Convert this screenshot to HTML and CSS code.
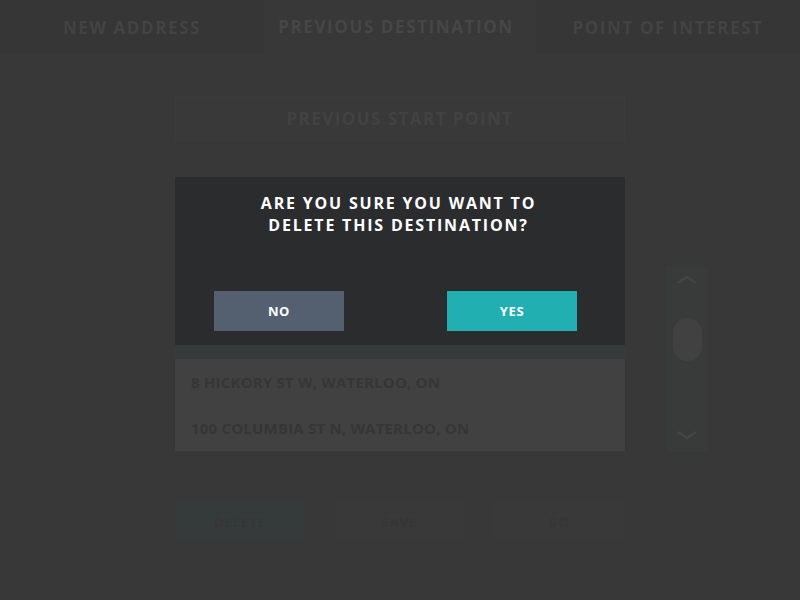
FILE: index.html
```html
<!DOCTYPE html>
<html>
<head>
<meta charset="utf-8">
<link rel="stylesheet" href="styles.css">
</head>
<body>
<div class="screen">
  <nav class="tabs">
    <div class="tab">NEW ADDRESS</div>
    <div class="tab active">PREVIOUS DESTINATION</div>
    <div class="tab">POINT OF INTEREST</div>
  </nav>
  <main class="main">
    <div class="start-btn">PREVIOUS START POINT</div>
    <div class="list-row">
      <ul class="list">
        <li class="item selected"></li>
        <li class="item">8 HICKORY ST W, WATERLOO, ON</li>
        <li class="item">100 COLUMBIA ST N, WATERLOO, ON</li>
      </ul>
      <div class="scrollbar">
        <svg class="chev" width="22" height="10" viewBox="0 0 22 10"><path d="M2 8 L11 2 L20 8" fill="none" stroke="#434545" stroke-width="2.5"/></svg>
        <div class="knob"></div>
        <svg class="chev down" width="22" height="10" viewBox="0 0 22 10"><path d="M2 2 L11 8 L20 2" fill="none" stroke="#434545" stroke-width="2.5"/></svg>
      </div>
    </div>
    <div class="actions">
      <div class="act delete">DELETE</div>
      <div class="act">SAVE</div>
      <div class="act">GO</div>
    </div>
  </main>
  <div class="dialog">
    <h1 class="title"><span class="line">ARE YOU SURE YOU WANT TO</span><span class="line">DELETE THIS DESTINATION?</span></h1>
    <div class="dialog-btns">
      <button class="btn no">NO</button>
      <button class="btn yes">YES</button>
    </div>
  </div>
</div>
</body>
</html>
```

FILE: styles.css
```css
* { box-sizing: border-box; }
html, body { margin: 0; padding: 0; }
body {
  background: #383838;
  font-family: "Open Sans", "DejaVu Sans", sans-serif;
  font-weight: 700;
  width: 800px;
  height: 600px;
  overflow: hidden;
}
.screen { position: relative; width: 800px; height: 600px; }
.tabs { display: flex; height: 53px; }
.tab {
  flex: 1;
  display: flex;
  align-items: center;
  justify-content: center;
  background: #363636;
  color: #434343;
  font-size: 17px;
  letter-spacing: 1.6px;
  padding-top: 2px;
}
.tab.active { background: #383838; color: #464646; padding-top: 0; padding-right: 8px; }
.main { padding-left: 175px; }
.start-btn {
  margin-top: 43px;
  width: 450px;
  height: 44px;
  background: #393939;
  border: 1px solid #3b3b3b;
  color: #424242;
  font-size: 17px;
  display: flex;
  align-items: center;
  justify-content: center;
  letter-spacing: 1.45px;
}
.list-row { display: flex; gap: 41px; margin-top: 37px; }
.list {
  list-style: none;
  margin: 0;
  padding: 0;
  width: 450px;
  height: 274px;
  overflow: hidden;
  background: #414141;
  display: flex;
  flex-direction: column;
  justify-content: flex-end;
}
.item {
  flex: none;
  height: 46px;
  display: flex;
  align-items: center;
  padding-left: 16px;
  font-size: 15px;
  color: #363636;
  letter-spacing: 0.2px;
}
.item.selected { background: #343b3a; }
.scrollbar {
  align-self: flex-end;
  width: 42px;
  height: 186px;
  background: #393b3b;
  display: flex;
  flex-direction: column;
  align-items: center;
  margin-bottom: -1px;
}
.chev { margin-top: 9px; }
.knob {
  margin-top: 33px;
  width: 29px;
  height: 43px;
  border-radius: 15px;
  background: #414141;
}
.chev.down { margin-top: auto; margin-bottom: 12px; }
.actions { display: flex; gap: 29.5px; margin-top: 51px; }
.act {
  width: 130px;
  height: 39px;
  background: #393939;
  color: #363636;
  font-size: 13px;
  display: flex;
  align-items: center;
  justify-content: center;
  letter-spacing: 0.9px;
}
.act.delete { background: #343b3a; }
.dialog {
  position: absolute;
  left: 175px;
  top: 177px;
  width: 450px;
  height: 168px;
  background: #2b2c2e;
  padding-top: 15px;
}
.title {
  margin: 0;
  color: #ffffff;
  font-size: 16px;
  line-height: 22px;
  text-align: center;
  letter-spacing: 1.8px;
  font-weight: 700;
  padding-right: 3px;
}
.line { display: block; }
.dialog-btns {
  display: flex;
  justify-content: space-between;
  margin-top: 55px;
  padding: 0 48px 0 39px;
}
.btn {
  width: 130px;
  height: 40px;
  border: 0;
  color: #ffffff;
  font-family: inherit;
  font-weight: 700;
  font-size: 13px;
  letter-spacing: 0.6px;
  padding: 0;
}
.btn.no { background: #546070; }
.btn.yes { background: #22afb1; }
```
